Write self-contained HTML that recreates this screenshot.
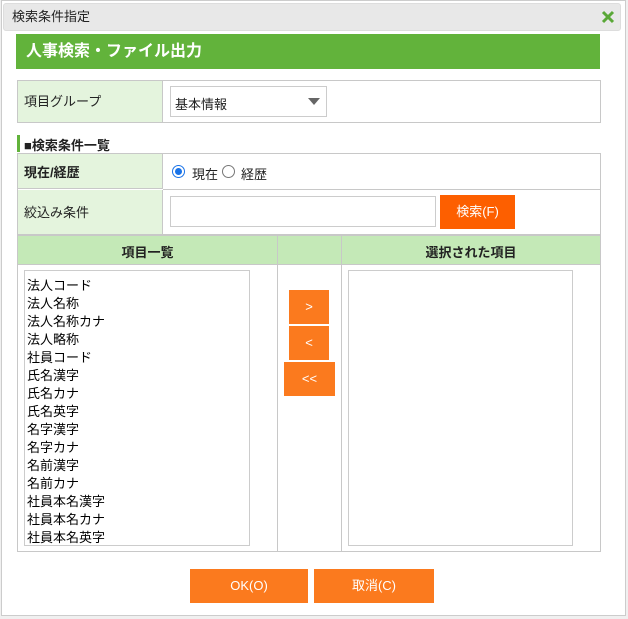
<!DOCTYPE html>
<html><head><meta charset="utf-8"><style>
*{box-sizing:border-box;margin:0;padding:0}
body{width:628px;height:619px;background:#f0f0f0;font-family:"Liberation Sans","Noto Sans CJK JP",sans-serif;font-size:13px;color:#222;position:relative;overflow:hidden}
.dlg{position:absolute;left:1px;top:0;width:625px;height:616px;background:#fff;border:1px solid #ccc}
.abs{position:absolute}
.title{left:3px;top:3px;width:618px;height:28px;background:#e8e8e8;border:1px solid #ddd;border-radius:3px;font-size:13px;line-height:26px;padding-left:8px}
.hdr{left:16px;top:34px;width:584px;height:35px;background:#62b33b;color:#fff;font-weight:bold;font-size:16px;line-height:35px;padding-left:10px}
.lbl{background:#e4f4dd}
.bd{border:1px solid #c8c8c8}
.btn{background:#fb7a1e;color:#fff;text-align:center}
</style></head><body>
<div class="dlg"></div>
<div class="abs title">検索条件指定</div>
<svg class="abs" style="left:601px;top:10px" width="14" height="14"><path d="M2 2L12 12M12 2L2 12" stroke="#5aa838" stroke-width="3"/></svg>
<div class="abs hdr">人事検索・ファイル出力</div>

<div class="abs bd" style="left:17px;top:80px;width:584px;height:43px"></div>
<div class="abs lbl" style="left:18px;top:81px;width:145px;height:41px;border-right:1px solid #c8c8c8;padding:10px 0 0 6px">項目グループ</div>
<div class="abs" style="left:170px;top:86px;width:157px;height:31px;border:1px solid #ccc;padding:7px 0 0 4px">基本情報</div>
<svg class="abs" style="left:308px;top:98px" width="12" height="7"><path d="M0 0H12L6 7Z" fill="#666"/></svg>

<div class="abs" style="left:17px;top:135px;width:3px;height:17px;background:#62b33b"></div>
<div class="abs" style="left:24px;top:135px;font-weight:bold;font-size:13px">■検索条件一覧</div>

<div class="abs bd" style="left:17px;top:153px;width:584px;height:82px"></div>
<div class="abs lbl" style="left:18px;top:154px;width:145px;height:35px;border-right:1px solid #c8c8c8;border-bottom:1px solid #c8c8c8;padding:8px 0 0 6px;font-weight:bold">現在/経歴</div>
<div class="abs" style="left:163px;top:189px;width:437px;height:1px;background:#c8c8c8"></div>
<div class="abs" style="left:172px;top:165px;width:13px;height:13px;border:1px solid #1a73e8;border-radius:50%"></div>
<div class="abs" style="left:175px;top:168px;width:7px;height:7px;background:#1a73e8;border-radius:50%"></div>
<div class="abs" style="left:192px;top:164px">現在</div>
<div class="abs" style="left:222px;top:165px;width:13px;height:13px;border:1px solid #777;border-radius:50%"></div>
<div class="abs" style="left:241px;top:164px">経歴</div>
<div class="abs lbl" style="left:18px;top:190px;width:145px;height:44px;border-right:1px solid #c8c8c8;padding:12px 0 0 6px">絞込み条件</div>
<div class="abs" style="left:170px;top:196px;width:266px;height:31px;border:1px solid #ccc"></div>
<div class="abs" style="left:440px;top:195px;width:75px;height:34px;background:#fd5f00;color:#fff;text-align:center;line-height:34px">検索(F)</div>

<div class="abs bd" style="left:17px;top:235px;width:584px;height:317px"></div>
<div class="abs" style="left:18px;top:236px;width:582px;height:29px;background:#c4e9b7;border-bottom:1px solid #c8c8c8"></div>
<div class="abs" style="left:277px;top:236px;width:1px;height:315px;background:#c8c8c8"></div>
<div class="abs" style="left:341px;top:236px;width:1px;height:315px;background:#c8c8c8"></div>
<div class="abs" style="left:18px;top:242px;width:259px;text-align:center;font-weight:bold">項目一覧</div>
<div class="abs" style="left:342px;top:242px;width:258px;text-align:center;font-weight:bold">選択された項目</div>
<div class="abs" style="left:24px;top:270px;width:226px;height:276px;border:1px solid #ccc;padding:6px 0 0 2px;line-height:18px;font-size:13px;color:#000">法人コード<br>法人名称<br>法人名称カナ<br>法人略称<br>社員コード<br>氏名漢字<br>氏名カナ<br>氏名英字<br>名字漢字<br>名字カナ<br>名前漢字<br>名前カナ<br>社員本名漢字<br>社員本名カナ<br>社員本名英字</div>
<div class="abs" style="left:348px;top:270px;width:225px;height:276px;border:1px solid #ccc"></div>
<div class="abs btn" style="left:289px;top:290px;width:40px;height:34px;line-height:34px">&gt;</div>
<div class="abs btn" style="left:289px;top:326px;width:40px;height:34px;line-height:34px">&lt;</div>
<div class="abs btn" style="left:284px;top:362px;width:51px;height:34px;line-height:34px">&lt;&lt;</div>

<div class="abs btn" style="left:190px;top:569px;width:118px;height:34px;line-height:34px">OK(O)</div>
<div class="abs btn" style="left:314px;top:569px;width:120px;height:34px;line-height:34px">取消(C)</div>
</body></html>
